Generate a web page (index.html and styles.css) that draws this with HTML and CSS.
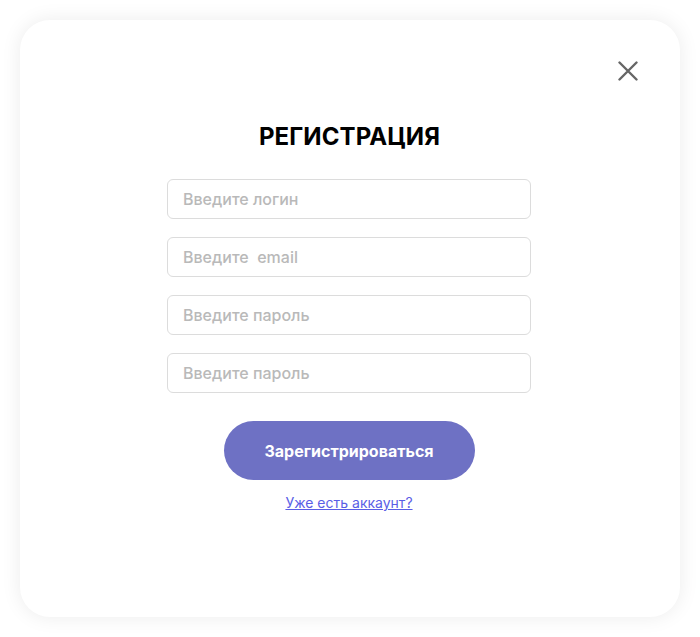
FILE: index.html
```html
<!DOCTYPE html>
<html lang="ru">
<head>
<meta charset="utf-8">
<link rel="stylesheet" href="styles.css">
</head>
<body>
<div class="card">
  <button class="close" aria-label="Закрыть">
    <svg width="20" height="20" viewBox="0 0 20 20"><path d="M1.5 1.5 L18.5 18.5 M18.5 1.5 L1.5 18.5" stroke="#666" stroke-width="2.4" stroke-linecap="round" fill="none"/></svg>
  </button>
  <h1 class="title">РЕГИСТРАЦИЯ</h1>
  <form class="form">
    <input class="field" type="text" placeholder="Введите логин">
    <input class="field" type="text" placeholder="Введите  email">
    <input class="field" type="password" placeholder="Введите пароль">
    <input class="field" type="password" placeholder="Введите пароль">
    <button class="submit" type="button">Зарегистрироваться</button>
    <a class="link" href="#">Уже есть аккаунт?</a>
  </form>
</div>
</body>
</html>
```
FILE: styles.css
```css
html, body {
  margin: 0;
  padding: 0;
  background: #fff;
}
body {
  font-family: Inter, "Noto Sans", sans-serif;
  padding: 20px;
}
.card {
  position: relative;
  box-sizing: border-box;
  width: 660px;
  height: 597px;
  background: #fff;
  border-radius: 30px;
  box-shadow: 0 0 20px rgba(0, 0, 0, 0.08);
  display: flex;
  flex-direction: column;
  align-items: center;
  padding-top: 102px;
  padding-right: 2px;
}
.close {
  position: absolute;
  top: 41px;
  right: 42px;
  width: 20px;
  height: 20px;
  padding: 0;
  border: 0;
  background: none;
  cursor: pointer;
}
.close svg { display: block; }
.title {
  margin: 0;
  font-size: 24px;
  line-height: 30px;
  font-weight: 700;
  color: #000;
  letter-spacing: 0.1px;
  padding-left: 1px;
}
.form {
  margin-top: 27px;
  display: flex;
  flex-direction: column;
  align-items: center;
  width: 364px;
}
.field {
  box-sizing: border-box;
  width: 364px;
  height: 40px;
  margin: 0 0 18px;
  padding: 0 15px;
  border: 1px solid #dcdcdc;
  border-radius: 6px;
  font-family: Inter, "Noto Sans", sans-serif;
  font-size: 16px;
  font-weight: 500;
  color: #333;
  outline: none;
}
.field::placeholder {
  color: #b9b9b9;
}
.submit {
  margin-top: 10px;
  width: 251px;
  height: 59px;
  border: 0;
  border-radius: 30px;
  background: #6e71c4;
  color: #fff;
  font-family: Inter, "Noto Sans", sans-serif;
  font-size: 16px;
  font-weight: 700;
  cursor: pointer;
}
.link {
  margin-top: 14px;
  font-size: 14px;
  line-height: 17px;
  color: #5a5ee6;
  text-decoration: underline;
}
```
